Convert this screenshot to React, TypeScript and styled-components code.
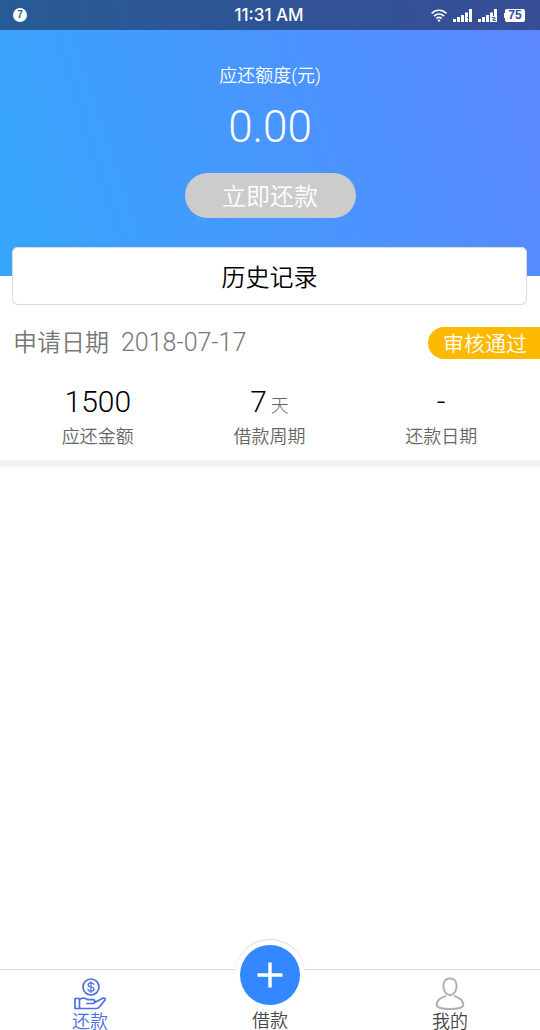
import React from 'react';
import styled, { createGlobalStyle } from 'styled-components';

const GlobalStyle = createGlobalStyle`
  *, *::before, *::after { box-sizing: border-box; }
  body {
    margin: 0;
    background: #fff;
    color: #000;
    font-family: Roboto, 'Noto Sans CJK SC', sans-serif;
    font-weight: 350;
  }
  button { font: inherit; border: 0; cursor: pointer; }
`;

const Page = styled.div`
  min-height: 100vh;
  display: flex;
  flex-direction: column;
`;

const Hero = styled.header`
  height: 276px;
  display: flex;
  flex-direction: column;
  align-items: center;
  color: #fff;
  background: linear-gradient(72deg, #35a6fa 0%, #4896ff 50%, #5c86ff 100%);
`;

const StatusBar = styled.div`
  width: 100%;
  height: 30px;
  padding: 0 15px 0 13px;
  display: grid;
  grid-template-columns: 1fr auto 1fr;
  align-items: center;
  background: rgba(20, 20, 45, 0.5);
`;

const Badge = styled.span`
  width: 14px;
  height: 14px;
  border-radius: 50%;
  background: #fff;
  color: #265b93;
  font: 700 10px/14px 'Liberation Sans', sans-serif;
  text-align: center;
`;

const Clock = styled.span`
  font: 500 17px/30px Inter, 'Liberation Sans', sans-serif;
`;

const StatusIcons = styled.div`
  display: flex;
  justify-content: flex-end;
  align-items: center;
  gap: 6px;
`;

const Caption = styled.div`
  margin-top: 33px;
  font-size: 18px;
  line-height: 26px;
`;

const Amount = styled.div`
  margin-top: 13px;
  font-size: 44px;
  font-weight: 300;
  line-height: 50px;
`;

const RepayButton = styled.button`
  width: 171px;
  height: 45px;
  margin-top: 21px;
  padding: 0 0 3px;
  border-radius: 23px;
  background: #ccc;
  color: #fff;
  && { font-size: 24px; }
`;

const HistoryButton = styled.button`
  height: 58px;
  margin: -29px 13px 0 12px;
  padding: 0 0 2px;
  border-radius: 6px;
  background: #fff;
  color: #000;
  box-shadow: inset 0 0 0 1px #dcdce0;
  && { font-size: 24px; }
`;

const Loan = styled.section`
  margin-top: 21px;
  border-bottom: 7px solid #f3f2f2;
`;

const LoanHead = styled.div`
  padding-left: 13px;
  display: flex;
  align-items: center;
  justify-content: space-between;
  color: #777;
  font-size: 24px;
  line-height: 34px;
`;

const ApplyDate = styled.div`
  display: flex;
  gap: 12px;
  time {
    font-size: 25px;
    font-weight: 300;
  }
`;

const Tag = styled.span`
  width: 112px;
  height: 32px;
  padding-left: 15px;
  border-radius: 16px 0 0 16px;
  background: #fdb900;
  color: #fff;
  font-size: 21px;
`;

const Stats = styled.dl`
  margin: 0;
  padding: 22px 13px 10px 12px;
  display: grid;
  grid-template-columns: repeat(3, 1fr);
  text-align: center;
`;

const Stat = styled.div`
  display: flex;
  flex-direction: column-reverse;
  gap: 2px;
`;

const StatValue = styled.dd`
  height: 40px;
  margin: 0;
  font-size: 30px;
  font-weight: 300;
  line-height: 40px;
  small {
    margin-left: 4px;
    color: #666;
    font-size: 18px;
    line-height: 20px;
  }
`;

const StatLabel = styled.dt`
  color: #666;
  font-size: 18px;
  line-height: 26px;
`;

const TabBar = styled.nav`
  height: 61px;
  margin-top: auto;
  display: grid;
  grid-template-columns: repeat(3, 1fr);
  border-top: 1px solid #dcdcdc;
`;

const Tab = styled.a<{ $active?: boolean }>`
  height: 60px;
  display: flex;
  flex-direction: column;
  align-items: center;
  gap: 3px;
  padding-top: 7px;
  color: ${(p) => (p.$active ? '#4b6fe0' : '#444')};
  font-size: 18px;
  line-height: 16px;
  text-decoration: none;
  svg { flex: none; }
`;

const BorrowTab = styled(Tab)`
  height: 91px;
  margin-top: -31px;
  padding-top: 0;
  gap: 5px;
`;

const PlusRing = styled.span`
  flex: none;
  width: 70px;
  height: 69px;
  padding-top: 6px;
  display: flex;
  justify-content: center;
  border-radius: 35px;
  background: #fff;
  box-shadow: inset 0 1px 0 #dcdcdc;
`;

const PlusCircle = styled.span`
  width: 60px;
  height: 60px;
  display: flex;
  align-items: center;
  justify-content: center;
  border-radius: 50%;
  background: #3388ff;
`;

const WifiIcon = () => (
  <svg width="16" height="13" viewBox="0 0 16 13" fill="none" stroke="#fff" strokeWidth="1.7" aria-hidden="true">
    <path d="M.6 4.4C4.7.2 11.3.2 15.4 4.4M3 7.1c2.8-2.8 7.2-2.8 10 0M5.3 9.5c1.5-1.5 3.9-1.5 5.4 0" />
    <path d="M8 10.2l1.6 1.3L8 13l-1.6-1.5z" fill="#fff" stroke="none" />
  </svg>
);

const SignalIcon = ({ sim }: { sim: 1 | 2 }) => (
  <svg width="19" height="13" viewBox="0 0 19 13" fill="#fff" aria-hidden="true">
    <path d="M0 10h3v3H0zM4 8h3v5H4zM8 6h3v7H8zM12 3.500h3V13h-3zM16 0h3v13h-3z" />
    {sim === 1 ? (
      <path d="M14 8.500h1.500V12" fill="none" stroke="#34549a" />
    ) : (
      <>
        <path d="M14 7h5v6h-5z" />
        <path d="M14 8.500h3v1.500h-2v1.500h3" fill="none" stroke="#34549a" strokeWidth=".9" />
      </>
    )}
  </svg>
);

const Battery = styled.span`
  width: 20px;
  height: 13px;
  margin-left: 2px;
  border-radius: 2px;
  background: #fff;
  box-shadow: -5px 0 0 -4px #fff;
  color: #37509a;
  font: 700 12px/13px 'Liberation Sans', sans-serif;
  text-align: center;
`;

const PlusIcon = () => (
  <svg width="26" height="26" viewBox="0 0 26 26" stroke="#fff" strokeWidth="3.400" aria-hidden="true">
    <path d="M13 .5v25M.5 13h25" />
  </svg>
);

const RepayIcon = () => (
  <svg width="34" height="34" viewBox="0 0 34 34" fill="none" stroke="#4b6fe0" strokeWidth="1.700" strokeLinejoin="round" strokeLinecap="round" aria-hidden="true">
    <circle cx="18" cy="10" r="8" />
    <path d="M20.900 7.700c-.3-1.300-1.400-1.900-2.900-1.900-1.700 0-2.900.8-2.900 2.100 0 2.900 6 1.300 6 4.200 0 1.300-1.300 2.100-3.100 2.100s-2.900-.8-3.100-2.100M18 4.500v11" strokeWidth="1.200" />
    <path d="M2 21.500h4.500v10H2zM6.500 22.500c2.500-1.800 5.500-1.800 8 .2h5.200c2.800 0 2.800 3.800 0 3.800H14M21.800 25.500l8-4.200c1.600-.8 3.100.5 2.200 1.700l-5.400 6.800c-.8 1.100-1.600 1.700-3 1.700H6.500" />
  </svg>
);

const UserIcon = () => (
  <svg width="30" height="34" viewBox="0 0 30 34" fill="none" stroke="#b3b0b1" strokeWidth="2" strokeLinecap="round" aria-hidden="true">
    <path d="M15 1.500c4 0 6.600 3 6.600 7.300 0 5-2.700 9.200-6.600 9.200s-6.600-4.200-6.600-9.200C8.400 4.500 11 1.500 15 1.500z" />
    <path d="M10.300 19.300C5.200 20.800 1.700 23.500 1.700 28c0 2.500 5.500 4 13.300 4s13.300-1.500 13.300-4c0-4.500-3.500-7.200-8.600-8.700" />
  </svg>
);

const stats = [
  { label: '应还金额', value: '1500', unit: '' },
  { label: '借款周期', value: '7', unit: '天' },
  { label: '还款日期', value: '-', unit: '' },
];

export default function App() {
  return (
    <>
      <GlobalStyle />
      <Page>
        <Hero>
          <StatusBar>
            <Badge>7</Badge>
            <Clock>11:31 AM</Clock>
            <StatusIcons>
              <WifiIcon />
              <SignalIcon sim={1} />
              <SignalIcon sim={2} />
              <Battery>75</Battery>
            </StatusIcons>
          </StatusBar>
          <Caption>应还额度(元)</Caption>
          <Amount>0.00</Amount>
          <RepayButton type="button">立即还款</RepayButton>
        </Hero>
        <HistoryButton type="button">历史记录</HistoryButton>
        <Loan>
          <LoanHead>
            <ApplyDate>
              <span>申请日期</span>
              <time dateTime="2018-07-17">2018-07-17</time>
            </ApplyDate>
            <Tag>审核通过</Tag>
          </LoanHead>
          <Stats>
            {stats.map((s) => (
              <Stat key={s.label}>
                <StatLabel>{s.label}</StatLabel>
                <StatValue>
                  {s.value}
                  {s.unit && <small>{s.unit}</small>}
                </StatValue>
              </Stat>
            ))}
          </Stats>
        </Loan>
        <TabBar>
          <Tab href="#repay" $active>
            <RepayIcon />
            还款
          </Tab>
          <BorrowTab href="#borrow">
            <PlusRing>
              <PlusCircle>
                <PlusIcon />
              </PlusCircle>
            </PlusRing>
            借款
          </BorrowTab>
          <Tab href="#me">
            <UserIcon />
            我的
          </Tab>
        </TabBar>
      </Page>
    </>
  );
}
